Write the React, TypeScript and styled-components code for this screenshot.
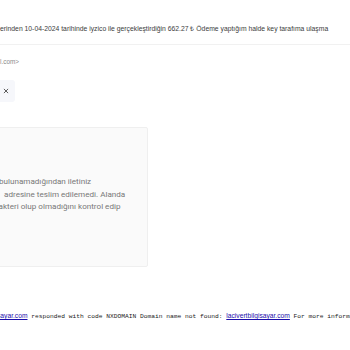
import React from 'react';
import styled, { createGlobalStyle } from 'styled-components';

const GlobalStyle = createGlobalStyle`
  html, body {
    margin: 0;
    padding: 0;
    background: #ffffff;
  }
`;

const Page = styled.div`
  width: 350px;
  height: 350px;
  overflow: hidden;
  background: #ffffff;
  display: flex;
  flex-direction: column;
`;

const SubjectBar = styled.div`
  height: 45px;
  box-sizing: border-box;
  padding-top: 24px;
  border-bottom: 1px solid #f1f1f1;
  font-family: 'Liberation Sans', Arial, sans-serif;
  font-size: 6.8px;
  line-height: 10px;
  color: #3c3c3c;
  white-space: nowrap;
`;

const Sender = styled.div`
  margin-top: 12px;
  font-family: 'Liberation Sans', Arial, sans-serif;
  font-size: 6.4px;
  line-height: 10px;
  color: #8a8a8a;
  white-space: nowrap;
`;

const CloseChip = styled.div`
  margin-top: 13px;
  width: 15px;
  height: 22px;
  background: #f6f7fb;
  border-radius: 0 3px 3px 0;
  display: flex;
  align-items: center;
  padding-left: 3px;
  box-sizing: border-box;
`;

const MessageBox = styled.div`
  margin-top: 25px;
  margin-left: -200px;
  width: 348px;
  height: 140px;
  box-sizing: border-box;
  background: #fafafa;
  border: 1px solid #efefef;
  border-radius: 2px;
  padding: 47px 0 0 200px;
`;

const BoxLine = styled.div<{ $indent: number }>`
  margin-left: ${({ $indent }) => $indent}px;
  font-family: Roboto, 'Noto Sans', sans-serif;
  font-size: 8.1px;
  line-height: 12.6px;
  color: #787878;
  white-space: nowrap;
`;

const DsnLine = styled.div`
  margin-top: 44px;
  margin-left: -3px;
  font-family: 'Liberation Mono', 'Courier New', monospace;
  font-size: 6.25px;
  line-height: 10px;
  color: #222222;
  white-space: nowrap;
`;

const DsnLink = styled.a`
  font-family: 'Liberation Sans', Arial, sans-serif;
  font-size: 6.7px;
  color: #1a0dab;
  text-decoration: underline;
`;

const CloseIcon = () => (
  <svg width="6" height="6" viewBox="0 0 10 10">
    <path d="M1.5 1.5 L8.5 8.5 M8.5 1.5 L1.5 8.5" stroke="#555" strokeWidth="1.6" />
  </svg>
);

export default function App() {
  return (
    <Page>
      <GlobalStyle />
      <SubjectBar>
        erinden 10-04-2024 tarihinde iyzico ile gerçekleştirdiğin 662.27 ₺ Ödeme yaptığım halde key tarafıma ulaşma
      </SubjectBar>
      <Sender>l.com&gt;</Sender>
      <CloseChip>
        <CloseIcon />
      </CloseChip>
      <MessageBox>
        <BoxLine $indent={-2}>bulunamadığından iletiniz</BoxLine>
        <BoxLine $indent={3}>adresine teslim edilemedi. Alanda</BoxLine>
        <BoxLine $indent={-5}>rakteri olup olmadığını kontrol edip</BoxLine>
      </MessageBox>
      <DsnLine>
        <DsnLink href="#">sayar.com</DsnLink> responded with code NXDOMAIN Domain name not found:{' '}
        <DsnLink href="#">lacivertbilgisayar.com</DsnLink> For more information
      </DsnLine>
    </Page>
  );
}
